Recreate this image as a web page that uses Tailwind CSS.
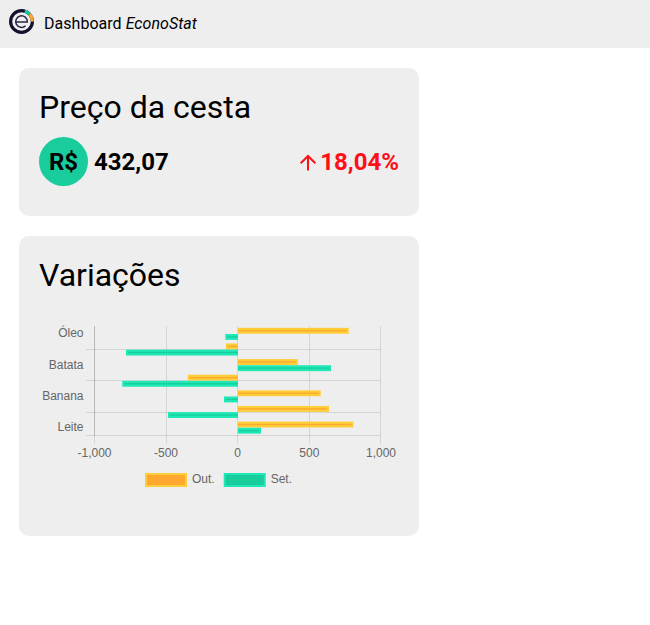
<!DOCTYPE html>
<html lang="pt-BR">
<head>
<meta charset="utf-8">
<title>Dashboard EconoStat</title>
<script src="https://cdn.jsdelivr.net/npm/@tailwindcss/browser@4"></script>
</head>
<body class="bg-white text-black font-['Roboto',sans-serif]">
<header class="flex h-12 items-center bg-[#eeeeee] pl-2">
  <svg class="mb-[5px] size-[27px]" viewBox="0 0 27 27" fill="none">
    <circle cx="13.5" cy="13.5" r="10.9" stroke="#14112f" stroke-width="3.2"/>
    <path d="M16.8 3.1A10.9 10.9 0 0 1 21.7 6.3" stroke="#18cc9c" stroke-width="3.2"/>
    <path d="M21.7 6.3A10.9 10.9 0 0 1 24.4 13.5" stroke="#ffa72f" stroke-width="3.2"/>
    <path d="M7.800 13.900H19.300A5.800 5.800 0 1 0 17.600 17.700" stroke="#2a2748" stroke-width="1.500"/>
  </svg>
  <h1 class="ml-[9px] text-base font-normal tracking-[0.03px]">Dashboard <em>EconoStat</em></h1>
</header>
<main class="flex flex-col gap-5 pl-[19px] pt-5">
  <section class="h-[148px] w-[400px] rounded-[10px] bg-[#eeeeee] px-5 pt-5">
    <h2 class="text-[32px] leading-[38px] font-normal">Preço da cesta</h2>
    <div class="mt-[11px] flex items-center text-2xl font-bold">
      <span class="flex size-[49px] items-center justify-center rounded-full bg-[#18cc9c]">R$</span>
      <span class="ml-1.5">432,07</span>
      <span class="ml-auto flex items-center text-[#ff1018]">
        <svg class="mr-[3px] size-[18px]" viewBox="0 0 18 18" fill="none" stroke="currentColor" stroke-width="2"><path d="M9 17.500V3M1.700 10.300L9 3L16.300 10.300"/></svg>18,04%</span>
    </div>
  </section>
  <section class="h-[300px] w-[400px] rounded-[10px] bg-[#eeeeee] px-5 pt-5">
    <h2 class="text-[32px] leading-[38px] font-normal">Variações</h2>
    <svg class="mt-[22px] block h-[180px] w-[360px] font-['Liberation_Sans',Arial,sans-serif] text-xs" viewBox="39 316 360 180">
      <g stroke="#000" stroke-opacity=".1">
        <path d="M166.500 326V444M237.500 326V444M309.500 326V444M380.500 326V444M86 349.500H381M86 380.500H381M86 412.500H381M86 435.500H381"/>
        <path d="M94.500 326V436" stroke-opacity=".22"/><path d="M94.500 436V444"/>
      </g>
      <g id="bars"></g>
      <g fill="#666" text-anchor="end">
        <text x="83.500" y="337">Óleo</text><text x="83.500" y="369">Batata</text><text x="83.500" y="400">Banana</text><text x="83.500" y="431">Leite</text>
      </g>
      <g fill="#666" text-anchor="middle">
        <text x="94.500" y="457">-1,000</text><text x="166" y="457">-500</text><text x="237.500" y="457">0</text><text x="309.300" y="457">500</text><text x="381" y="457">1,000</text>
      </g>
      <g stroke-width="2">
        <rect x="146" y="474" width="40" height="12" fill="#ffa72f" stroke="#ffcd38"/>
        <rect x="224.700" y="474" width="40" height="12" fill="#18cc9c" stroke="#1ee9b6"/>
      </g>
      <g fill="#666"><text x="192" y="483">Out.</text><text x="270.700" y="483">Set.</text></g>
    </svg>
  </section>
</main>
<script>
// [end of "Out." bar, end of "Set." bar] for each product, from top to bottom
const rows = [[348.700,225.300],[226,126],[297.700,331],[187.700,122.200],[320.700,224],[329,168],[353.400,261]];
const ns = 'http://www.w3.org/2000/svg';
const g = document.getElementById('bars');
rows.forEach((row, i) => row.forEach((end, k) => {
  const y = 327.850 + i * 15.620 + k * 6.150;
  const zero = 238;
  const add = (a, b, top, h, fill) => {
    const r = document.createElementNS(ns, 'rect');
    r.setAttribute('x', Math.min(a, b)); r.setAttribute('width', Math.abs(b - a));
    r.setAttribute('y', top); r.setAttribute('height', h); r.setAttribute('fill', fill);
    g.appendChild(r);
  };
  add(zero, end, y, 5.900, k ? '#1ee9b6' : '#ffcd38');
  add(zero, end + (end > zero ? -2 : 2), y + 2.250, 1.300, k ? '#18cc9c' : '#ffa72f');
}));
</script>
</body>
</html>
